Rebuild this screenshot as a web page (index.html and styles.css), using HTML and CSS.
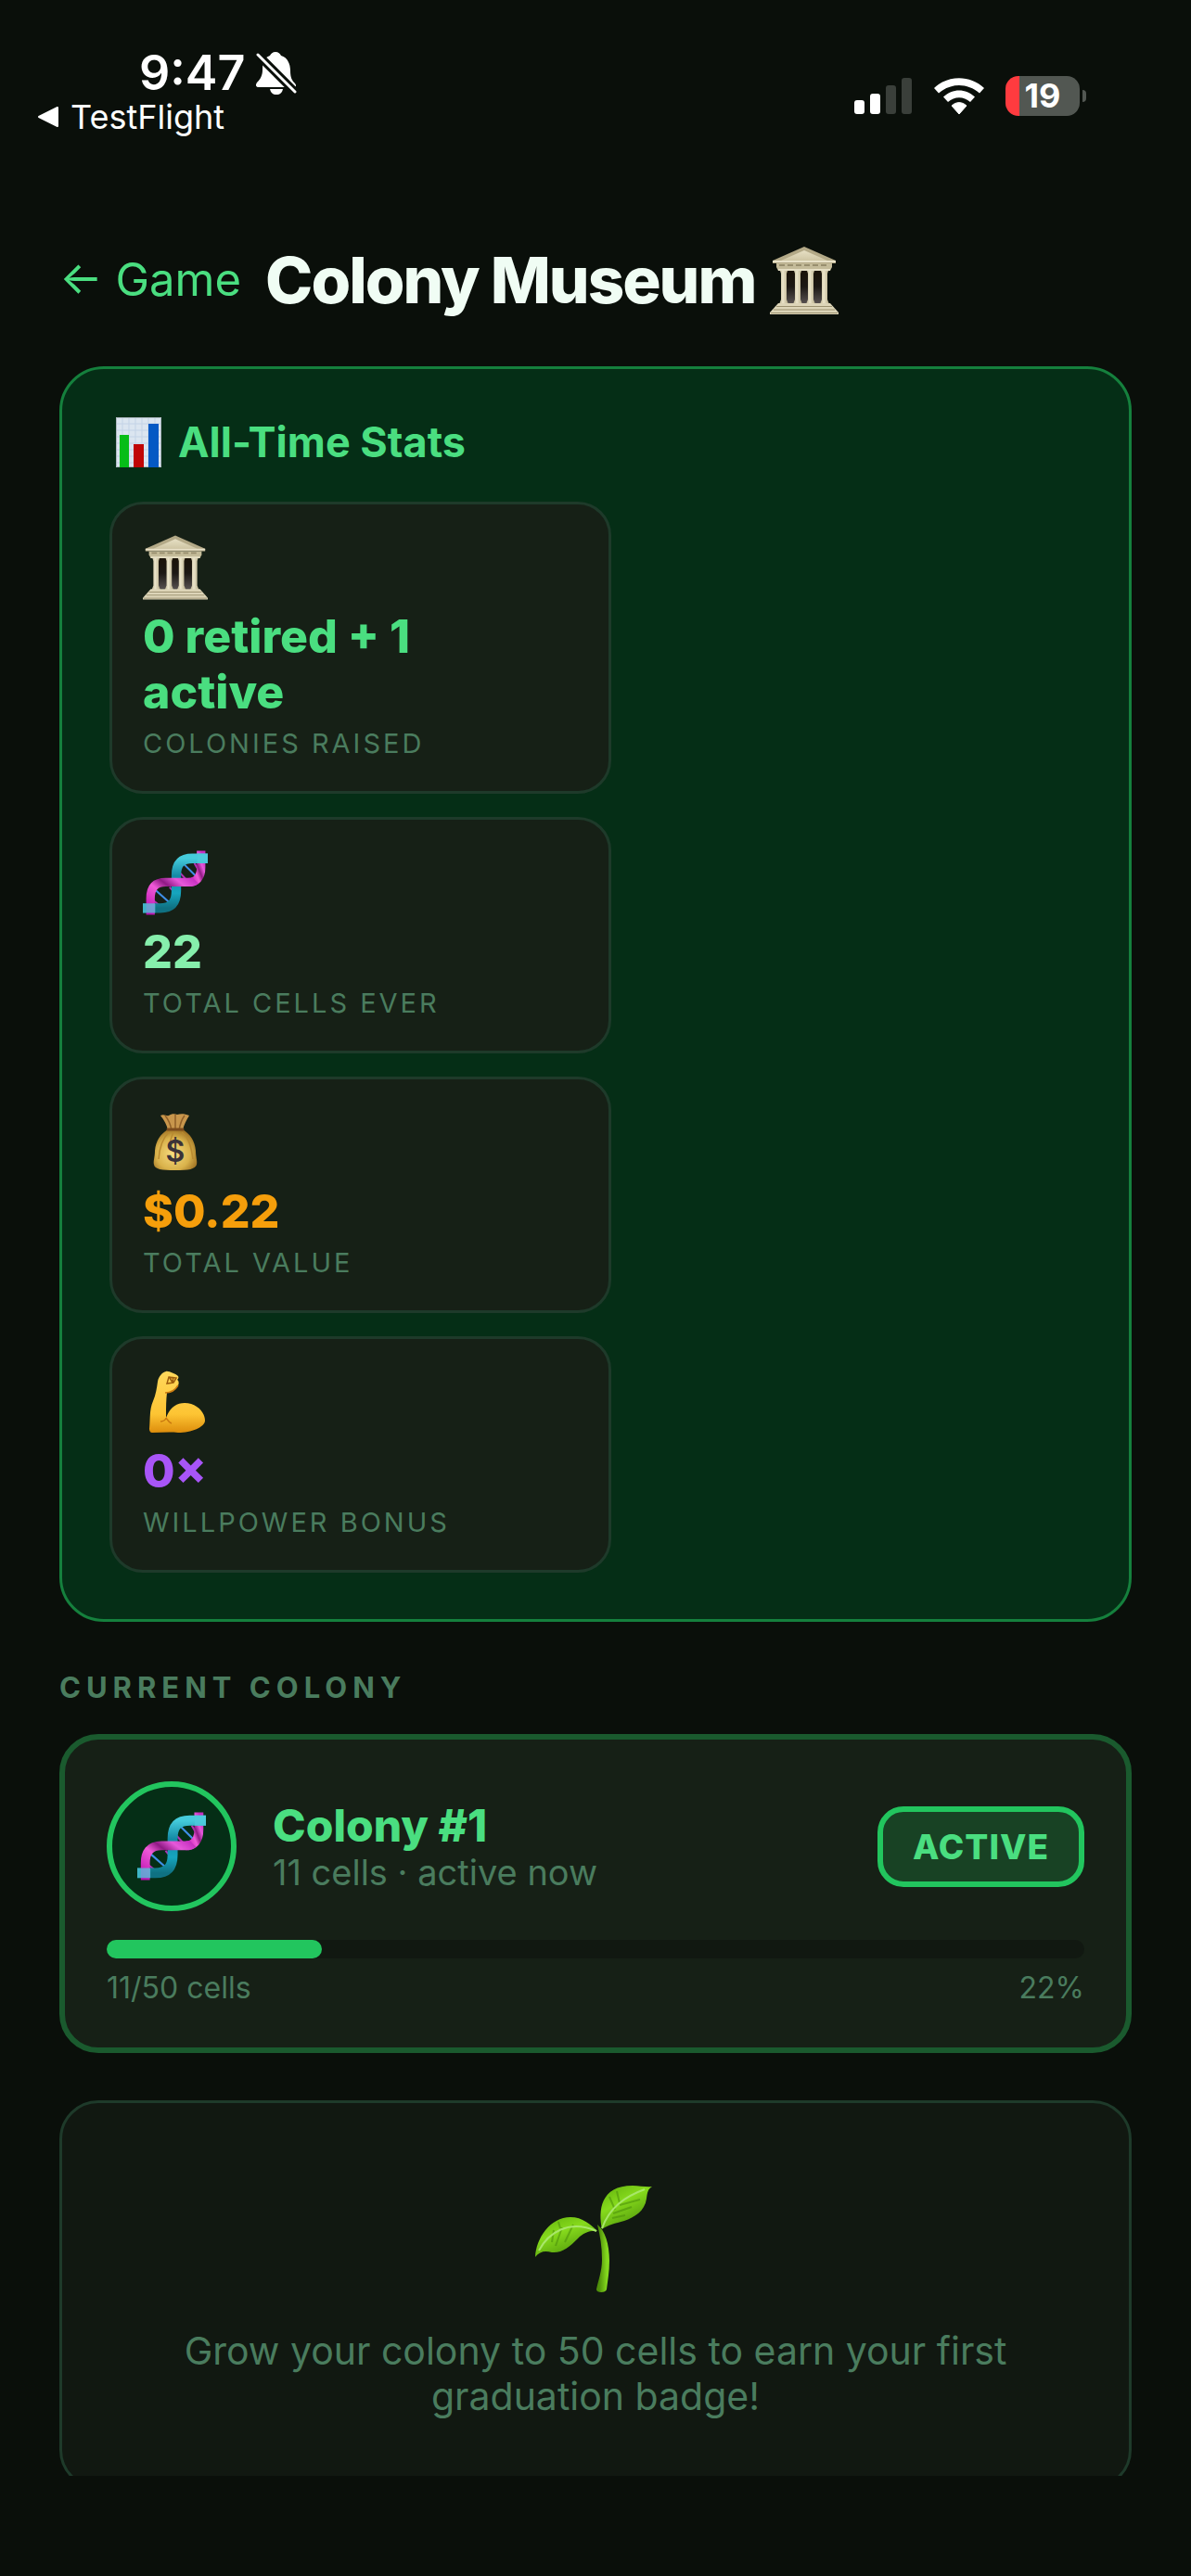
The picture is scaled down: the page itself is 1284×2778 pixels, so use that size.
FILE: index.html
```html
<!DOCTYPE html>
<html lang="en">
<head>
    <meta charset="UTF-8">
    <meta name="viewport" content="width=device-width, initial-scale=1.0">
    <title>Colony Museum</title>
    <link rel="stylesheet" href="styles.css">
</head>
<body>
    <!-- shared icons -->
    <svg class="sprite" aria-hidden="true">
        <defs>
            <linearGradient id="stone" x1="0" y1="0" x2="0" y2="1">
                <stop offset="0" stop-color="#e6dfc4"/>
                <stop offset="1" stop-color="#cfc6a4"/>
            </linearGradient>
            <linearGradient id="column" x1="0" y1="0" x2="1" y2="0">
                <stop offset="0" stop-color="#b9b08e"/>
                <stop offset="0.4" stop-color="#ece5cb"/>
                <stop offset="1" stop-color="#b5ab88"/>
            </linearGradient>
            <linearGradient id="doorway" x1="0" y1="0" x2="0" y2="1">
                <stop offset="0" stop-color="#1a1208"/>
                <stop offset="0.5" stop-color="#1c1814"/>
                <stop offset="1" stop-color="#56504f"/>
            </linearGradient>
            <linearGradient id="teal" x1="0" y1="0" x2="0" y2="1">
                <stop offset="0" stop-color="#45cbdb"/>
                <stop offset="0.35" stop-color="#138aa5"/>
                <stop offset="0.7" stop-color="#16a5be"/>
                <stop offset="1" stop-color="#0f7182"/>
            </linearGradient>
            <linearGradient id="pink" x1="0" y1="1" x2="1" y2="0">
                <stop offset="0" stop-color="#b80fae"/>
                <stop offset="0.45" stop-color="#f05ad8"/>
                <stop offset="0.62" stop-color="#8f1a84"/>
                <stop offset="0.8" stop-color="#e659da"/>
                <stop offset="1" stop-color="#c62fc0"/>
            </linearGradient>
        </defs>
        <symbol id="icon-museum" viewBox="0 0 74 73">
            <path d="M14 25h46v36H14z" fill="url(#doorway)"/>
            <path d="M37 0 71 15v3H3v-3z" fill="#b3a987"/>
            <path d="M37 4 62 15H12z" fill="url(#stone)"/>
            <path d="M3 15h68v2H3z" fill="#e9e2c9"/>
            <path d="M7 18h60v4l-2 4H9l-2-4z" fill="#c4bb99"/>
            <path d="M10 20h54" stroke="#988e6e" stroke-width="2" stroke-dasharray="6 3"/>
            <path d="M9 24h56v2H9z" fill="#e6dfc5"/>
            <g fill="url(#column)">
                <path d="M11 26h8l-1 3v28l2 5H10l2-5V29z"/>
                <path d="M26 26h8l-1 3v28l2 5H25l2-5V29z"/>
                <path d="M40 26h8l-1 3v28l2 5H39l2-5V29z"/>
                <path d="M55 26h8l-1 3v28l2 5H54l2-5V29z"/>
            </g>
            <path d="M9 61h56l9 10v2H0v-2z" fill="#ddd5b8"/>
            <path d="M7 64.500h60M4 68h66M1 71.500h72" stroke="#9b9170" stroke-width="1"/>
        </symbol>
        <symbol id="icon-dna" viewBox="0 0 68 67">
            <g stroke-width="2">
                <path d="M42 13 57 28M12 40 30 56" stroke="#3f8fe8"/>
                <path d="M36 20 49 34M6 48 22 61M54 13l6 10M28 38l8 9" stroke="#b12fb4"/>
            </g>
            <path d="M61 0v17c0 11-5 16-13 16" fill="none" stroke="url(#pink)" stroke-width="9"/>
            <path d="M68 8H52C40 8 35 14 35 26v16c0 12-5 18-17 18H0" fill="none" stroke="url(#teal)" stroke-width="10"/>
            <path d="M55 31c-2 2-4 2-7 2H24C12 33 8 40 8 50v17" fill="none" stroke="url(#pink)" stroke-width="9"/>
            <path d="M0 55h13v10H0zM57 3h11v10H57z" fill="#4fcbdc" opacity="0.75"/>
        </symbol>
    </svg>

    <div class="status-bar">
        <div class="status-left">
            <div class="clock">
                <span>9:47</span>
                <svg width="44" height="48" viewBox="0 0 44 48" aria-label="Silent mode">
                    <path d="M21 1c3 0 5 2 6 4 7 2 10 9 10 16 0 8 2 11 5 14 2 2 1 4-1 4H3c-3 0-4-2-2-5 4-4 6-8 6-14C7 12 9 7 15 5c1-2 3-4 6-4z" fill="#fff"/>
                    <path d="M15 41h14c-1 4-3 6-7 6s-6-2-7-6z" fill="#fff"/>
                    <path d="M2 4 42 44" stroke="#0a0f0a" stroke-width="9"/>
                    <path d="M2 4 42 44" stroke="#fff" stroke-width="3" stroke-linecap="round"/>
                </svg>
            </div>
            <a class="app-link" href="#">
                <svg width="24" height="24" viewBox="0 0 24 24" aria-hidden="true"><path d="M2 12 22 2v20z" fill="#fff" stroke="#fff" stroke-width="2" stroke-linejoin="round"/></svg>
                TestFlight
            </a>
        </div>
        <div class="status-right">
            <svg width="63" height="40" viewBox="0 0 63 40" aria-label="Signal">
                <rect x="0" y="24" width="11" height="15" rx="3" fill="#fff"/>
                <rect x="17" y="17" width="11" height="22" rx="3" fill="#fff"/>
                <rect x="34" y="8" width="11" height="31" rx="3" fill="#3a3f3a"/>
                <rect x="51" y="0" width="11" height="39" rx="3" fill="#3a3f3a"/>
            </svg>
            <svg width="54" height="40" viewBox="0 0 54 40" aria-label="Wi-Fi">
                <path d="M0 11C15-3.500 39-3.500 54 11l-5 5.500C36 5 18 5 5 16.500z" fill="#fff"/>
                <path d="M10 20.500c10-9.500 24-9.500 34 0l-5 5.500c-7-6.500-17-6.500-24 0z" fill="#fff"/>
                <path d="M19 30c5-4.500 11-4.500 16 0l-8 9z" fill="#fff" stroke="#fff" stroke-width="1" stroke-linejoin="round"/>
            </svg>
            <div class="battery"><span>19</span></div>
        </div>
    </div>

    <main class="screen">
        <header class="page-header">
            <a class="back-link" href="#">← Game</a>
            <h1>Colony Museum</h1>
            <svg class="title-icon" aria-hidden="true"><use href="#icon-museum"/></svg>
        </header>

        <section class="stats">
            <h2 class="stats-title">
                <svg width="62" height="54" viewBox="0 0 62 54" aria-hidden="true">
                    <path d="M7 0h49v54H7z" fill="#dbe5f0"/>
                    <path d="M7 7h49M7 14h49M7 21h49M7 28h49M7 35h49M7 42h49M7 49h49M14 0v54M21 0v54M28 0v54M35 0v54M42 0v54M49 0v54" stroke="#c3d3e6" stroke-width="1"/>
                    <path d="M7.500 0.500h48v53h-48z" fill="none" stroke="#aeb8c0"/>
                    <path d="M11 19h10v35H11z" fill="#06bd17"/>
                    <path d="M26 29h11v25H26z" fill="#c00606"/>
                    <path d="M42 7h11v47H42z" fill="#0459c4"/>
                </svg>
                All-Time Stats
            </h2>
            <div class="stats-grid">
                <div class="stat">
                    <svg class="stat-icon" aria-hidden="true"><use href="#icon-museum"/></svg>
                    <div class="stat-value green">0 retired + 1<br>active</div>
                    <div class="stat-label">Colonies raised</div>
                </div>
                <div class="stat">
                    <svg class="stat-icon" aria-hidden="true"><use href="#icon-dna"/></svg>
                    <div class="stat-value mint">22</div>
                    <div class="stat-label">Total cells ever</div>
                </div>
                <div class="stat">
                    <svg class="stat-icon" viewBox="0 0 70 70" aria-hidden="true">
                        <defs>
                            <radialGradient id="sack" cx="0.45" cy="0.6" r="0.65">
                                <stop offset="0" stop-color="#f7dc80"/>
                                <stop offset="0.6" stop-color="#d9b24b"/>
                                <stop offset="1" stop-color="#94661c"/>
                            </radialGradient>
                        </defs>
                        <path d="M19 6c4-2 6 1 9 0 3-2 6-2 9-1 4-1 8-1 13 1-3 5-6 10-7 16H27c-1-6-4-11-8-16z" fill="#c8964c"/>
                        <path d="M24 6c4 5 6 10 7 16M35 5v17M45 6c-3 4-5 10-6 16" stroke="#8f5f28" stroke-width="1.500" fill="none"/>
                        <path d="M27 21h16c8 5 13 12 14 23 0 7 2 11 1 15-2 5-8 6-23 6s-22-1-23-6c-1-4 1-8 1-15 1-11 6-18 14-23z" fill="url(#sack)"/>
                        <path d="M28 24c-7 7-10 15-11 29M33 24c-3 7-4 11-4 14M42 24c8 7 10 15 12 29" stroke="#b98a30" stroke-width="1.500" fill="none"/>
                        <path d="M27 21h16" stroke="#7d4c1d" stroke-width="3" stroke-linecap="round"/>
                        <text x="35" y="56" text-anchor="middle" class="sack-sign">$</text>
                    </svg>
                    <div class="stat-value amber">$0.22</div>
                    <div class="stat-label">Total value</div>
                </div>
                <div class="stat">
                    <svg class="stat-icon" viewBox="0 0 70 70" aria-hidden="true">
                        <defs>
                            <linearGradient id="skin" x1="0" y1="0" x2="0" y2="1">
                                <stop offset="0" stop-color="#ffd85c"/>
                                <stop offset="0.7" stop-color="#fdc433"/>
                                <stop offset="1" stop-color="#dd8d0c"/>
                            </linearGradient>
                        </defs>
                        <path d="M25 2c2-1 11 3 13 5 1 2 0 3-1 4 2 1 2 4 1 6-3 5-7 8-12 8-1 8-1 18-1 27 4-11 11-16 20-16 13 0 22 10 22 19 0 7-15 13-29 13-9-1-19 0-28 0-2 0-3-2-3-4 1-11 0-21 4-30 3-7 4-14 5-21 1-6 5-10 9-11z" fill="url(#skin)"/>
                        <path d="M28 8l8 1-3 5-7 1zM29 9l3 5M33 8l-1 5" fill="none" stroke="#9c5c0c" stroke-width="1.500"/>
                        <path d="M38 17c-3 5-8 8-14 8M25 52c0 2-3 4-6 4M25 52c2 3 3 5 6 6" fill="none" stroke="#c97a10" stroke-width="1.500"/>
                    </svg>
                    <div class="stat-value purple">0×</div>
                    <div class="stat-label">Willpower bonus</div>
                </div>
            </div>
        </section>

        <h2 class="section-title">Current colony</h2>
        <section class="colony">
            <div class="colony-row">
                <div class="avatar">
                    <svg width="74" height="74" aria-hidden="true"><use href="#icon-dna"/></svg>
                </div>
                <div class="colony-info">
                    <div class="colony-name">Colony #1</div>
                    <div class="colony-sub">11 cells · active now</div>
                </div>
                <span class="badge">ACTIVE</span>
            </div>
            <div class="progress"><div class="progress-fill" style="width: 22%"></div></div>
            <div class="progress-labels">
                <span>11/50 cells</span>
                <span>22%</span>
            </div>
        </section>

        <section class="empty">
            <svg width="144" height="144" viewBox="0 0 144 144" aria-hidden="true">
                <defs>
                    <linearGradient id="leaf" x1="0" y1="0" x2="0.6" y2="1">
                        <stop offset="0" stop-color="#5fae0c"/>
                        <stop offset="0.45" stop-color="#86da1c"/>
                        <stop offset="1" stop-color="#4f960a"/>
                    </linearGradient>
                    <linearGradient id="stem" x1="0" y1="0" x2="1" y2="0">
                        <stop offset="0.2" stop-color="#4f8f0a"/>
                        <stop offset="0.8" stop-color="#84d81e"/>
                    </linearGradient>
                </defs>
                <path d="M7 94c1-20 16-43 38-43 13 0 22 8 29 15-8-1-15 2-21 8-9 9-17 16-28 15-8-2-13-1-18 5z" fill="url(#leaf)"/>
                <path d="M79 64c-4-20-2-47 33-47 8 0 15 2 21 1-5 3-5 7-6 13-2 14-13 20-24 24-10 3-17 4-24 9z" fill="url(#leaf)"/>
                <g fill="none" stroke="#4c930b" stroke-width="2" opacity="0.6">
                    <path d="M27 65l-2 13M36 62l-7 20M48 59l-9 19M32 56l2 7M93 43l-6-14M98 36l-3-13M91 47l20-7M98 38l22-6M90 52l14-3"/>
                </g>
                <path d="M11 87c10-19 32-34 62-21M79 63c8-22 24-34 46-42" fill="none" stroke="#a8e76a" stroke-width="2"/>
                <path d="M74 59c8 6 13 21 13 39 0 12-2 22-3 31-1 4-11 4-11 0 2-10 6-20 6-32 0-14-2-26-5-38z" fill="url(#stem)"/>
            </svg>
            <p>Grow your colony to 50 cells to earn your first graduation badge!</p>
        </section>
    </main>
</body>
</html>
```

FILE: styles.css
```css
* {
    box-sizing: border-box;
}

body {
    margin: 0;
    height: 100vh;
    display: flex;
    flex-direction: column;
    padding-bottom: 108px;
    background: #0a0f0a;
    color: #f0fdf4;
    font-family: Inter, "Liberation Sans", sans-serif;
    overflow: hidden;
}

h1, h2, p {
    margin: 0;
}

a {
    text-decoration: none;
}

svg {
    display: block;
    flex-shrink: 0;
}

.sprite {
    position: absolute;
    width: 0;
    height: 0;
}

/* status bar */
.status-bar {
    display: flex;
    justify-content: space-between;
    align-items: flex-end;
    padding: 51px 113px 115px 40px;
    color: #fff;
}

.clock {
    display: flex;
    align-items: center;
    gap: 12px;
    margin-left: 110px;
    font-size: 52px;
    font-weight: 600;
    line-height: 56px;
}

.app-link {
    display: flex;
    align-items: center;
    gap: 12px;
    color: #fff;
    font-size: 36px;
    line-height: 38px;
}

.status-right {
    display: flex;
    align-items: center;
    gap: 23px;
    padding-bottom: 20px;
}

.battery {
    position: relative;
    width: 80px;
    height: 43px;
    margin-right: 7px;
    border-radius: 14px;
    background: linear-gradient(to right, #ff3b3f 15px, #525752 15px);
    font-size: 36px;
    font-weight: 700;
    line-height: 43px;
    text-align: center;
}

.battery::after {
    content: "";
    position: absolute;
    right: -7px;
    top: 15px;
    width: 4px;
    height: 13px;
    border-radius: 0 4px 4px 0;
    background: #525752;
}

/* scrolling area */
.screen {
    flex: 1;
    min-height: 0;
    padding: 0 64px;
    overflow: hidden;
}

.page-header {
    display: flex;
    align-items: center;
    margin-bottom: 51px;
}

.back-link {
    margin-right: 26px;
    color: #4ade80;
    font-size: 49px;
    line-height: 60px;
}

h1 {
    font-size: 69px;
    font-weight: 800;
    line-height: 84px;
    letter-spacing: -2px;
}

.title-icon {
    width: 74px;
    height: 73px;
    margin-left: 16px;
}

/* all-time stats */
.stats {
    padding: 52px 51px 50px;
    border: 3px solid #15803d;
    border-radius: 48px;
    background: #052e16;
}

.stats-title {
    display: flex;
    align-items: center;
    gap: 12px;
    margin-bottom: 37px;
    color: #4ade80;
    font-size: 45px;
    font-weight: 700;
    line-height: 54px;
}

.stats-grid {
    display: grid;
    grid-template-columns: 16fr 15fr;
    gap: 25px 0;
}

.stat {
    grid-column: 1;
    padding: 33px;
    border: 3px solid #1e3a2a;
    border-radius: 36px;
    background: #162016;
}

.stat-icon {
    width: 70px;
    height: 70px;
    margin-bottom: 9px;
}

.sack-sign {
    fill: #3b3238;
    font-size: 32px;
    font-weight: 600;
}

.stat-value {
    font-size: 50px;
    font-weight: 800;
    line-height: 60px;
}

.green { color: #4ade80; }
.mint { color: #86efac; }
.amber { color: #f59e0b; }
.purple { color: #a855f7; }

.stat-label {
    margin-top: 8px;
    color: #4a7c5e;
    font-size: 29px;
    line-height: 36px;
    letter-spacing: 3px;
    text-transform: uppercase;
}

/* current colony */
.section-title {
    margin: 52px 0 31px;
    color: #4a7c5e;
    font-size: 31px;
    font-weight: 700;
    line-height: 38px;
    letter-spacing: 6px;
    text-transform: uppercase;
}

.colony {
    padding: 45px;
    border: 6px solid #1a5a2e;
    border-radius: 42px;
    background: #162016;
}

.colony-row {
    display: flex;
    align-items: center;
    gap: 39px;
}

.avatar {
    display: flex;
    align-items: center;
    justify-content: center;
    width: 140px;
    height: 140px;
    border: 6px solid #22c55e;
    border-radius: 50%;
    background: #052e16;
}

.colony-info {
    flex: 1;
}

.colony-name {
    color: #4ade80;
    font-size: 48px;
    font-weight: 800;
    line-height: 57px;
}

.colony-sub {
    color: #4a7c5e;
    font-size: 38px;
    line-height: 45px;
}

.badge {
    padding: 15px 32px;
    border: 6px solid #22c55e;
    border-radius: 28px;
    background: #184224;
    color: #4ade80;
    font-size: 37px;
    font-weight: 800;
    line-height: 45px;
    letter-spacing: 1px;
}

.progress {
    height: 20px;
    margin-top: 31px;
    border-radius: 10px;
    background: #111811;
}

.progress-fill {
    height: 100%;
    border-radius: 10px;
    background: #22c55e;
}

.progress-labels {
    display: flex;
    justify-content: space-between;
    margin-top: 13px;
    color: #4a7c5e;
    font-size: 32px;
    line-height: 38px;
}

/* no badges yet */
.empty {
    display: flex;
    flex-direction: column;
    align-items: center;
    gap: 27px;
    margin-top: 51px;
    padding: 72px;
    border: 3px solid #1e3a2a;
    border-radius: 42px;
    background: #111811;
    color: #4a7c5e;
    font-size: 41px;
    line-height: 49px;
    text-align: center;
}
```
